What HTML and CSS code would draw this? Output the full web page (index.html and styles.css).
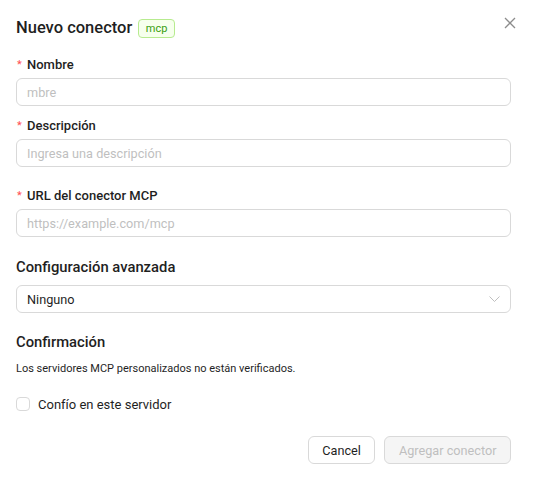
FILE: index.html
```html
<!DOCTYPE html>
<html lang="es">
<head>
<meta charset="utf-8">
<link rel="stylesheet" href="styles.css">
</head>
<body>
<div class="modal">
  <div class="header">
    <h1 class="title">Nuevo conector</h1>
    <span class="tag">mcp</span>
    <button class="close" aria-label="Cerrar">
      <svg width="12" height="12" viewBox="0 0 12 12"><path d="M1 1L11 11M11 1L1 11" stroke="#8c8c8c" stroke-width="1.3" fill="none"/></svg>
    </button>
  </div>

  <div class="field f-name">
    <label class="label"><span class="req">*</span>Nombre</label>
    <input class="input" placeholder="mbre">
  </div>
  <div class="field f-desc">
    <label class="label"><span class="req">*</span>Descripción</label>
    <input class="input" placeholder="Ingresa una descripción">
  </div>
  <div class="field f-url">
    <label class="label"><span class="req">*</span>URL del conector MCP</label>
    <input class="input" placeholder="https://example.com/mcp">
  </div>

  <h2 class="section s-adv">Configuración avanzada</h2>
  <div class="select">
    <span>Ninguno</span>
    <svg width="11" height="6" viewBox="0 0 11 6"><path d="M0.5 0.5L5.5 5.5L10.5 0.5" stroke="#bfbfbf" stroke-width="1" fill="none"/></svg>
  </div>

  <h2 class="section s-conf">Confirmación</h2>
  <p class="note">Los servidores MCP personalizados no están verificados.</p>

  <label class="check">
    <span class="box"></span>
    <span>Confío en este servidor</span>
  </label>

  <div class="footer">
    <button class="btn">Cancel</button>
    <button class="btn disabled">Agregar conector</button>
  </div>
</div>
</body>
</html>
```

FILE: styles.css
```css
* { box-sizing: border-box; }
html, body { margin: 0; padding: 0; background: #fff; }
body { font-family: Roboto, "Liberation Sans", sans-serif; color: #1f1f1f; }
.modal { width: 533px; padding: 16px 22px 0 16px; }
.header { display: flex; align-items: center; height: 24px; position: relative; }
.title { margin: 0; font-size: 16.5px; font-weight: 500; line-height: 24px; color: #1f1f1f; }
.tag {
  margin-left: 6px; height: 19px; padding: 0 6.5px; display: inline-flex; align-items: center;
  font-size: 11px; color: #389e0d; background: #f6ffed; border: 1px solid #b7eb8f; border-radius: 4px;
}
.close {
  position: absolute; right: -7px; top: -1px; width: 16px; height: 16px; padding: 0; border: 0; background: none;
  display: flex; align-items: center; justify-content: center;
}
.field { display: flex; flex-direction: column; }
.f-name { margin-top: 14px; }
.f-desc { margin-top: 9px; }
.f-url { margin-top: 18px; }
.label { font-size: 13px; font-weight: 500; line-height: 22px; height: 22px; display: flex; align-items: center; color: #1f1f1f; }
.req { color: #ff4d4f; font-size: 11px; width: 10px; margin-left: 1px; font-weight: 400; }
.input {
  margin-top: 2px; height: 28px; width: 100%; border: 1px solid #d9d9d9; border-radius: 6px;
  padding: 0 10px; font-family: inherit; font-size: 12.7px; color: #1f1f1f; outline: none;
}
.input::placeholder { color: #bfbfbf; }
.section { margin: 18px 0 0; font-size: 14.8px; font-weight: 500; line-height: 24px; color: #1f1f1f; }
.select {
  margin-top: 6px; height: 28px; border: 1px solid #d9d9d9; border-radius: 6px; padding: 0 10px;
  display: flex; align-items: center; justify-content: space-between; font-size: 12.7px; color: #1f1f1f;
}
.s-conf { margin-top: 17px; }
.note { margin: 7px 0 0; font-size: 11px; line-height: 16px; color: #1f1f1f; }
.check { margin-top: 18px; display: flex; align-items: center; gap: 8px; font-size: 13px; height: 18px; color: #1f1f1f; }
.box { width: 14px; height: 14px; border: 1px solid #d9d9d9; border-radius: 4px; }
.footer { margin-top: 23px; display: flex; justify-content: flex-end; gap: 9px; }
.btn {
  height: 28px; padding: 0 13.5px; border: 1px solid #d9d9d9; border-radius: 6px; background: #fff;
  font-family: inherit; font-size: 12.7px; color: #1f1f1f;
}
.btn.disabled { background: #f5f5f5; color: #bfbfbf; }
```
